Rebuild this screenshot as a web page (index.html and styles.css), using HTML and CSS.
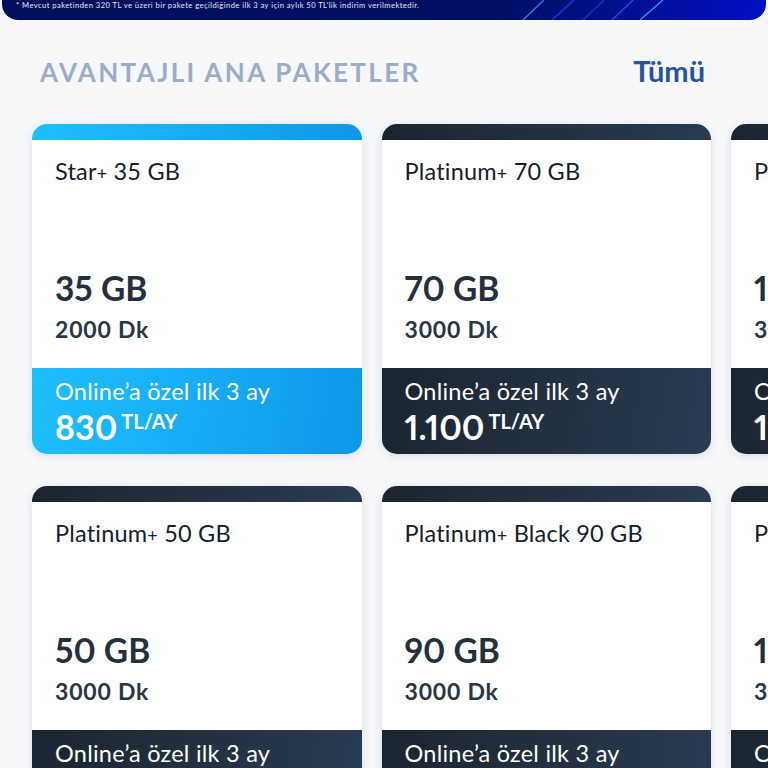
FILE: index.html
```html
<!DOCTYPE html>
<html lang="tr">
<head>
<meta charset="utf-8">
<title>Avantajlı Ana Paketler</title>
<link rel="stylesheet" href="styles.css">
</head>
<body>
<div class="banner">
  <p class="note">* Mevcut paketinden 320 TL ve üzeri bir pakete geçildiğinde ilk 3 ay için aylık 50 TL'lik indirim verilmektedir.</p>
  <svg class="stripes" width="150" height="20" viewBox="0 0 150 20" aria-hidden="true">
    <line x1="3" y1="20" x2="24" y2="0" stroke="#2a7fdc" stroke-width="1.4"/>
    <line x1="32" y1="20" x2="54" y2="0" stroke="#0f3fd2" stroke-width="1.4"/>
    <line x1="63" y1="20" x2="84" y2="0" stroke="#0f35c4" stroke-width="1.4"/>
    <line x1="92" y1="20" x2="113" y2="0" stroke="#1a55d8" stroke-width="1.4"/>
    <line x1="120" y1="20" x2="143" y2="0" stroke="#2c9ad8" stroke-width="1.4"/>
  </svg>
</div>
<div class="head">
  <h1 class="title">AVANTAJLI ANA PAKETLER</h1>
  <a class="all">Tümü</a>
</div>
<div class="grid">
  <article class="card star">
    <div class="bar"></div>
    <div class="body"><div class="name">Star<span class="plus">+</span> 35 GB</div><div class="gb">35 GB</div><div class="dk">2000 Dk</div></div>
    <div class="foot"><div class="promo">Online’a özel ilk 3 ay</div><div class="price">830<span class="unit">TL/AY</span></div></div>
  </article>
  <article class="card">
    <div class="bar"></div>
    <div class="body"><div class="name">Platinum<span class="plus">+</span> 70 GB</div><div class="gb">70 GB</div><div class="dk">3000 Dk</div></div>
    <div class="foot"><div class="promo">Online’a özel ilk 3 ay</div><div class="price">1.100<span class="unit">TL/AY</span></div></div>
  </article>
  <article class="card">
    <div class="bar"></div>
    <div class="body"><div class="name">Platinum<span class="plus">+</span> 100 GB</div><div class="gb">100 GB</div><div class="dk">3000 Dk</div></div>
    <div class="foot"><div class="promo">Online’a özel ilk 3 ay</div><div class="price">1.300<span class="unit">TL/AY</span></div></div>
  </article>
  <article class="card">
    <div class="bar"></div>
    <div class="body"><div class="name">Platinum<span class="plus">+</span> 50 GB</div><div class="gb">50 GB</div><div class="dk">3000 Dk</div></div>
    <div class="foot"><div class="promo">Online’a özel ilk 3 ay</div><div class="price">1.000<span class="unit">TL/AY</span></div></div>
  </article>
  <article class="card">
    <div class="bar"></div>
    <div class="body"><div class="name">Platinum<span class="plus">+</span> Black 90 GB</div><div class="gb">90 GB</div><div class="dk">3000 Dk</div></div>
    <div class="foot"><div class="promo">Online’a özel ilk 3 ay</div><div class="price">1.400<span class="unit">TL/AY</span></div></div>
  </article>
  <article class="card">
    <div class="bar"></div>
    <div class="body"><div class="name">Platinum<span class="plus">+</span> 120 GB</div><div class="gb">120 GB</div><div class="dk">3000 Dk</div></div>
    <div class="foot"><div class="promo">Online’a özel ilk 3 ay</div><div class="price">1.600<span class="unit">TL/AY</span></div></div>
  </article>
</div>
</body>
</html>
```
FILE: styles.css
```css
html, body {
  margin: 0;
  padding: 0;
  height: 768px;
  overflow: hidden;
}
body {
  background: #f5f7f9;
  font-family: "Lato", "Liberation Sans", sans-serif;
  color: #222f3e;
}
.banner {
  position: relative;
  height: 20px;
  margin: 0 2px;
  border-radius: 0 0 16px 16px;
  background: linear-gradient(90deg, #030f5c 0%, #010f62 65%, #0010c4 100%);
  overflow: hidden;
}
.note {
  margin: 0;
  padding: 0 0 0 14px;
  font-size: 7.6px;
  line-height: 11px;
  letter-spacing: 0.43px;
  color: #e4e8f6;
  white-space: nowrap;
}
.stripes {
  position: absolute;
  top: 0;
  left: 518px;
}
.head {
  display: flex;
  justify-content: space-between;
  align-items: center;
  height: 32px;
  margin-top: 36px;
  padding: 0 63px 0 40px;
}
.title {
  margin: 0;
  font-size: 26px;
  font-weight: 700;
  letter-spacing: 2.35px;
  color: #9dacc6;
}
.all {
  margin-bottom: 4px;
  font-size: 29px;
  font-weight: 700;
  color: #2b4f9e;
}
.grid {
  display: grid;
  grid-template-columns: repeat(3, 329.5px);
  gap: 32px 20px;
  width: 1100px;
  margin: 36px 0 0 32px;
}
.card {
  display: flex;
  flex-direction: column;
  height: 330px;
  border-radius: 15px;
  background: #fff;
  box-shadow: 0 2px 8px rgba(60, 80, 110, 0.14);
  overflow: hidden;
}
.bar {
  flex: none;
  height: 16px;
  background: linear-gradient(90deg, #1b2530, #2a3c52);
}
.star .bar {
  background: linear-gradient(90deg, #1ec0ff, #0f97e8);
}
.body {
  flex: 1;
  padding: 16px 23px 0;
}
.name {
  font-size: 23.5px;
  line-height: 30px;
  letter-spacing: 0.2px;
  color: #16202a;
  white-space: nowrap;
}
.plus {
  font-size: 18px;
}
.gb {
  margin-top: 80px;
  font-size: 33.5px;
  line-height: 40px;
  font-weight: 700;
  font-variant-numeric: proportional-nums;
  color: #24303e;
  white-space: nowrap;
}
.dk {
  margin-top: 7px;
  font-size: 23px;
  line-height: 28px;
  font-weight: 700;
  letter-spacing: 0.8px;
  color: #2a3645;
}
.foot {
  flex: none;
  box-sizing: border-box;
  height: 86px;
  padding: 8px 23px 0;
  color: #fff;
  background: linear-gradient(100deg, #1b2530, #2a3c52);
}
.star .foot {
  background: linear-gradient(100deg, #1ec0ff, #0f97e8);
}
.promo {
  font-size: 23.5px;
  line-height: 30px;
  letter-spacing: 0.24px;
  white-space: nowrap;
}
.price {
  display: flex;
  align-items: flex-start;
  margin-top: 1px;
  font-size: 34px;
  line-height: 40px;
  font-weight: 700;
  font-variant-numeric: proportional-nums;
  white-space: nowrap;
}
.unit {
  margin: 2px 0 0 4px;
  font-size: 20px;
  line-height: 24px;
}
```
